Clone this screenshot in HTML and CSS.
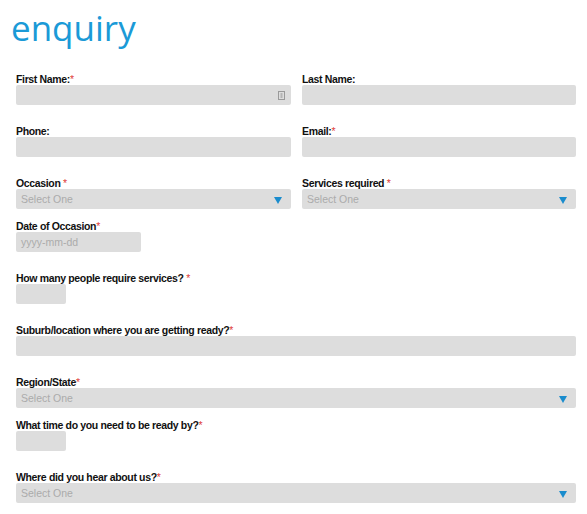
FILE: index.html
```html
<!DOCTYPE html>
<html>
<head>
<meta charset="utf-8">
<link rel="stylesheet" href="styles.css">
</head>
<body>
<h1 class="title">enquiry</h1>
<form class="form">
  <div class="row two">
    <div class="field">
      <label class="label">First Name:<span class="req">*</span></label>
      <div class="input has-icon">
        <svg class="autofill" width="7" height="9" viewBox="0 0 7 9"><rect x="0.5" y="0.5" width="6" height="8" fill="none" stroke="#9a9a9a"/><rect x="2.5" y="2" width="2" height="5" fill="#b5b5b5"/></svg>
      </div>
    </div>
    <div class="field">
      <label class="label">Last Name:</label>
      <div class="input"></div>
    </div>
  </div>
  <div class="row two">
    <div class="field">
      <label class="label">Phone:</label>
      <div class="input"></div>
    </div>
    <div class="field">
      <label class="label">Email:<span class="req">*</span></label>
      <div class="input"></div>
    </div>
  </div>
  <div class="row two sel-row">
    <div class="field">
      <label class="label">Occasion <span class="req">*</span></label>
      <div class="input select"><span class="ph">Select One</span><span class="arrow"></span></div>
    </div>
    <div class="field">
      <label class="label">Services required <span class="req">*</span></label>
      <div class="input select"><span class="ph">Select One</span><span class="arrow"></span></div>
    </div>
  </div>
  <div class="row">
    <label class="label">Date of Occasion<span class="req">*</span></label>
    <div class="input date"><span class="ph">yyyy-mm-dd</span></div>
  </div>
  <div class="row">
    <label class="label">How many people require services? <span class="req">*</span></label>
    <div class="input small"></div>
  </div>
  <div class="row">
    <label class="label">Suburb/location where you are getting ready?<span class="req">*</span></label>
    <div class="input"></div>
  </div>
  <div class="row sel-row">
    <label class="label">Region/State<span class="req">*</span></label>
    <div class="input select"><span class="ph">Select One</span><span class="arrow"></span></div>
  </div>
  <div class="row">
    <label class="label">What time do you need to be ready by?<span class="req">*</span></label>
    <div class="input small"></div>
  </div>
  <div class="row sel-row">
    <label class="label">Where did you hear about us?<span class="req">*</span></label>
    <div class="input select"><span class="ph">Select One</span><span class="arrow"></span></div>
  </div>
</form>
</body>
</html>
```
FILE: styles.css
```css
html, body {
  margin: 0;
  padding: 0;
  background: #ffffff;
}
body {
  font-family: "Liberation Sans", Arial, sans-serif;
  padding: 0 11px 0 16px;
}
.title {
  margin: 0 0 0 -5px;
  padding-top: 5px;
  height: 74px;
  box-sizing: border-box;
  font-family: "Open Sans", sans-serif;
  font-weight: 400;
  font-size: 35px;
  line-height: 46px;
  color: #1b9ad7;
  letter-spacing: 0;
}
.form {
  display: flex;
  flex-direction: column;
}
.row {
  margin-bottom: 21px;
}
.row.sel-row {
  margin-bottom: 12px;
}
.two {
  display: grid;
  grid-template-columns: 275px 274px;
  column-gap: 11px;
}
.label {
  display: block;
  font-size: 10.5px;
  line-height: 10px;
  height: 11px;
  font-weight: bold;
  letter-spacing: -0.35px;
  color: #111111;
  white-space: nowrap;
}
.req {
  color: #e0413a;
  font-weight: normal;
}
.input {
  height: 20px;
  background: #dddddd;
  border-radius: 2px;
  display: flex;
  align-items: center;
  padding: 0 5px;
  box-sizing: border-box;
  position: relative;
}
.has-icon {
  justify-content: flex-end;
  padding-right: 6px;
}
.ph {
  font-size: 10.5px;
  color: #ababab;
}
.select {
  justify-content: space-between;
  padding-right: 9px;
}
.arrow {
  width: 0;
  height: 0;
  border-left: 4px solid transparent;
  border-right: 4px solid transparent;
  border-top: 7px solid #1a8ccd;
  margin-top: 2px;
}
.date {
  width: 125px;
}
.small {
  width: 50px;
}
```
